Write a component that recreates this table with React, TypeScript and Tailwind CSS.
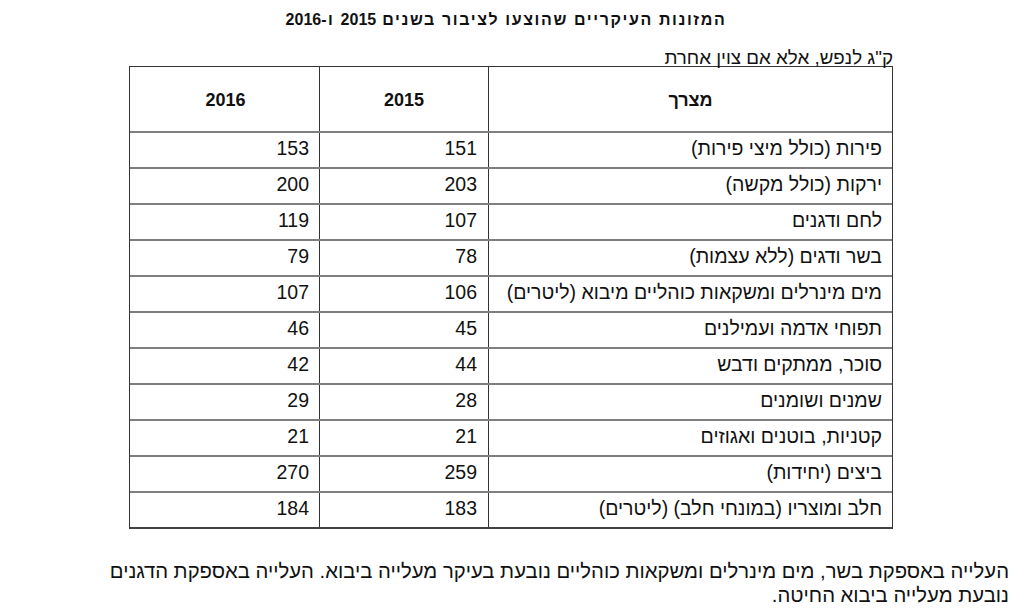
import React from "react";

const rows: [string, string, string][] = [
  ["פירות (כולל מיצי פירות)", "151", "153"],
  ["ירקות (כולל מקשה)", "203", "200"],
  ["לחם ודגנים", "107", "119"],
  ["בשר ודגים (ללא עצמות)", "78", "79"],
  ["מים מינרלים ומשקאות כוהליים מיבוא (ליטרים)", "106", "107"],
  ["תפוחי אדמה ועמילנים", "45", "46"],
  ["סוכר, ממתקים ודבש", "44", "42"],
  ["שמנים ושומנים", "28", "29"],
  ["קטניות, בוטנים ואגוזים", "21", "21"],
  ["ביצים (יחידות)", "259", "270"],
  ["חלב ומוצריו (במונחי חלב) (ליטרים)", "183", "184"],
];

export default function App() {
  return (
    <div
      dir="rtl"
      className="w-[1024px] h-[614px] bg-white text-[#111] overflow-hidden"
      style={{ fontFamily: '"Liberation Sans", Arial, sans-serif' }}
    >
      <div className="pt-[10px] pr-[12px] text-center font-bold text-[16px] leading-[19px]">
        <span className="tracking-[1.6px]">המזונות העיקריים שהוצעו לציבור בשנים </span>
        2015
        <span className="tracking-[1.6px]"> ו-</span>
        2016
      </div>
      <div className="mr-[131px] w-[764px]">
        <div className="mt-[21px] text-[18.8px] leading-[16px]">
          ק"ג לנפש, אלא אם צוין אחרת
        </div>
        <div className="border-t border-l border-r border-[#333]">
          <div className="flex border-b-2 border-[#7f7f7f] h-[66px] font-bold text-[18px]">
            <div className="w-[404px] border-l border-[#333] text-center leading-[66px]">
              מצרך
            </div>
            <div className="w-[169px] border-l border-[#333] text-center leading-[66px]">
              2015
            </div>
            <div className="w-[187px] text-center leading-[66px]">2016</div>
          </div>
          {rows.map((r, i) => (
            <div
              key={i}
              className={
                "flex h-[36px] border-b-2 text-[19.5px] leading-[30px] " +
                (i === rows.length - 1 ? "border-[#444]" : "border-[#7f7f7f]")
              }
            >
              <div className="w-[404px] border-l border-[#333] pr-[10px] whitespace-nowrap">
                {r[0]}
              </div>
              <div className="w-[169px] border-l border-[#333] pr-[11px]">{r[1]}</div>
              <div className="w-[187px] pr-[10px]">{r[2]}</div>
            </div>
          ))}
        </div>
      </div>
      <div className="mt-[30px] mr-[15px] text-[20.3px] leading-[24px] whitespace-nowrap">
        העלייה באספקת בשר, מים מינרלים ומשקאות כוהליים נובעת בעיקר מעלייה ביבוא. העלייה באספקת הדגנים
        <br />
        נובעת מעלייה ביבוא החיטה.
      </div>
    </div>
  );
}
